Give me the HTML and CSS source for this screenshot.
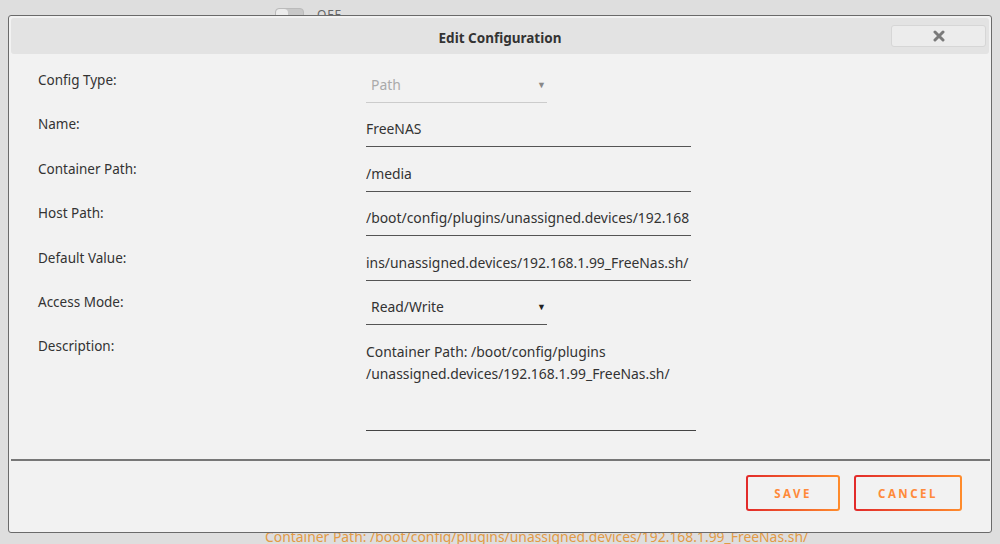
FILE: index.html
```html
<!DOCTYPE html>
<html lang="en">
<head>
  <meta charset="UTF-8" />
  <title>Edit Configuration</title>
  <link rel="stylesheet" href="styles.css">
</head>
<body>

  <div class="page">
    <div class="switch-row">
      <span class="switch"><span class="knob"></span></span>
      <span class="switch-label">OFF</span>
    </div>
    <div class="page-fill"></div>
    <div class="page-desc">Container Path: /boot/config/plugins/unassigned.devices/192.168.1.99_FreeNas.sh/</div>
  </div>

  <div class="dialog">
    <div class="titlebar">
      <span class="title">Edit Configuration</span>
      <button class="close" type="button">
        <svg width="12" height="12" viewBox="0 0 12 12">
          <path d="M2 2 L10 10 M10 2 L2 10" stroke="#7a7a7a" stroke-width="3" stroke-linecap="round"/>
        </svg>
      </button>
    </div>

    <div class="form">
      <label>Config Type:</label>
      <div class="select disabled"><span>Path</span><span class="arrow">&#9660;</span></div>

      <label>Name:</label>
      <div class="field">FreeNAS</div>

      <label>Container Path:</label>
      <div class="field">/media</div>

      <label>Host Path:</label>
      <div class="field">/boot/config/plugins/unassigned.devices/192.168</div>

      <label>Default Value:</label>
      <div class="field">ins/unassigned.devices/192.168.1.99_FreeNas.sh/</div>

      <label>Access Mode:</label>
      <div class="select"><span>Read/Write</span><span class="arrow">&#9660;</span></div>

      <label>Description:</label>
      <div class="textarea">Container Path: /boot/config/plugins<br>/unassigned.devices/192.168.1.99_FreeNas.sh/</div>
    </div>

    <div class="actions">
      <button class="btn save" type="button">SAVE</button>
      <button class="btn cancel" type="button">CANCEL</button>
    </div>
  </div>

</body>
</html>
```

FILE: styles.css
```css
body {
  margin: 0;
  font-family: 'Noto Sans', sans-serif;
  background-color: #dedede;
  color: #333;
  width: 1000px;
  height: 544px;
  overflow: hidden;
  position: relative;
}
.page {
  height: 544px;
  display: flex;
  flex-direction: column;
}
.switch-row {
  display: flex;
  align-items: center;
  gap: 13px;
  padding: 6px 0 0 275px;
}
.switch {
  width: 27px;
  height: 12px;
  border-radius: 4px;
  background: #c8c8c8;
  border: 1px solid #bbb;
  display: flex;
}
.knob {
  width: 12px;
  background: #ececec;
  border-radius: 4px;
}
.switch-label {
  font-size: 12px;
  color: #666;
  letter-spacing: 1px;
}
.page-fill {
  flex: 1;
}
.page-desc {
  padding: 0 0 0 265px;
  font-size: 13.9px;
  color: #e29a45;
  line-height: 18px;
  margin-bottom: -2px;
}

/* modal */
.dialog {
  position: absolute;
  left: 8px;
  top: 15px;
  width: 982px;
  height: 516px;
  background: #f2f2f2;
  border: 1px solid #6a6a6a;
  border-radius: 3px;
  box-sizing: content-box;
  display: flex;
  flex-direction: column;
}
.titlebar {
  margin: 2px 2px 0 2px;
  height: 36px;
  background: #e3e3e3;
  border-radius: 3px;
  display: flex;
  align-items: center;
  justify-content: center;
  position: relative;
}
.title {
  font-weight: bold;
  font-size: 13.5px;
  color: #333;
  padding-top: 3px;
}
.close {
  position: absolute;
  right: 3px;
  top: 7px;
  width: 95px;
  height: 22px;
  background: #ececec;
  border: 1px solid #d6d6d6;
  border-radius: 3px;
  display: flex;
  align-items: center;
  justify-content: center;
  padding: 0;
}
.form {
  display: grid;
  grid-template-columns: 328px 1fr;
  row-gap: 11.4px;
  padding: 16px 0 0 29px;
  align-items: start;
}
.form label {
  font-size: 13.5px;
  line-height: 20px;
  color: #333;
}
.field,
.select {
  font-size: 13.9px;
  line-height: 20px;
  padding: 5px 0 7px 0;
  border-bottom: 1px solid #555;
  color: #333;
  width: 325px;
  white-space: nowrap;
  overflow: hidden;
}
.select {
  width: 175px;
  padding-left: 5px;
  padding-right: 1px;
  display: flex;
  justify-content: space-between;
  align-items: center;
}
.select .arrow {
  font-size: 9px;
  color: #222;
}
.select.disabled {
  color: #aaa;
  border-bottom-color: #ccc;
}
.select.disabled .arrow {
  color: #888;
}
.textarea {
  width: 330px;
  height: 82px;
  padding: 5px 0 7px 0;
  font-size: 13.9px;
  line-height: 22px;
  color: #333;
  border-bottom: 1px solid #444;
}
.actions {
  margin: 28px 1px 0 2px;
  border-top: 2px solid #777;
  display: flex;
  justify-content: flex-end;
  gap: 14px;
  padding: 14px 28px 0 0;
}
.btn {
  height: 36px;
  padding: 0;
  border: 2px solid transparent;
  border-radius: 3px;
  background: linear-gradient(#f2f2f2, #f2f2f2) padding-box,
              linear-gradient(to right, #e22a2a, #ff8c2c) border-box;
  color: #ff8a3a;
  font-family: 'Noto Sans', sans-serif;
  font-weight: bold;
  font-size: 11.5px;
  letter-spacing: 2.5px;
  cursor: pointer;
}
.save {
  width: 94px;
}
.cancel {
  width: 108px;
}
```
